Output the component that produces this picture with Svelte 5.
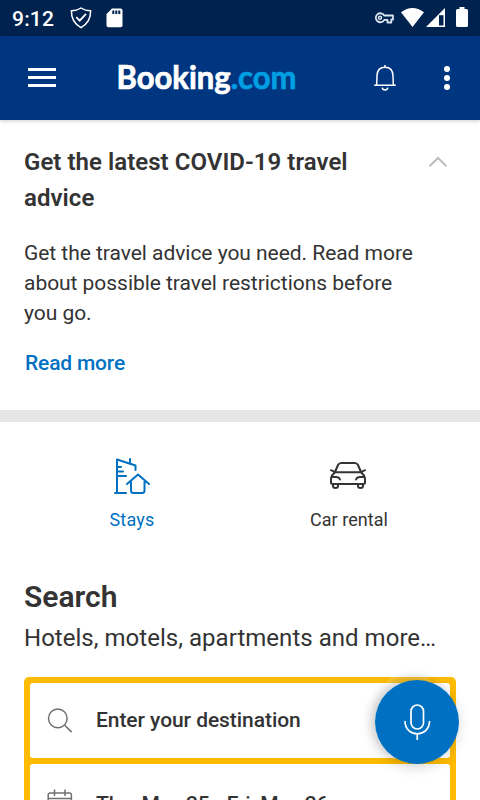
<script>
  const advice = ['Get the travel advice you need. Read more', 'about possible travel restrictions before', 'you go.'];
</script>

<main class="screen">
  <div class="status">
    <span class="clock">9:12</span>
    <svg class="shield" width="22" height="22" viewBox="0 0 22 22" fill="none" stroke="#fff" stroke-width="1.500">
      <path d="M11 1C8 3 4.500 3.700 1.400 3.800C1.200 11 3.500 16.500 11 20.700C18.500 16.500 20.800 11 20.600 3.800C17.500 3.700 14 3 11 1Z" />
      <path d="M6.300 10.200L9.700 13.600L16 6.800" stroke-width="1.800" />
    </svg>
    <svg class="card" width="17" height="20" viewBox="0 0 17 20">
      <path fill="#fff" d="M6 .5H14.500Q16.500 .5 16.500 2.500V17.500Q16.500 19.300 14.500 19.300H2.500Q.5 19.300 .5 17.500V6Z" />
      <path fill="#00224f" d="M6.300 2.500H8.300V6H6.300ZM9.300 2.500H11.300V6H9.300ZM12.300 2.500H14.300V6H12.300Z" />
    </svg>
    <svg class="signals" width="96" height="24" viewBox="373 6 96 24">
      <path d="M384.200 15.500H393V19.500H391.300V22.500H387.500V19.800H384.300A4.500 4.500 0 1 1 384.200 15.500Z" fill="none" stroke="#dce4ef" stroke-width="1.800" stroke-linejoin="round" />
      <circle cx="380" cy="17.700" r="1.500" fill="none" stroke="#dce4ef" stroke-width="1.500" />
      <path fill="#fff" d="M401 12.300Q412.500 3.500 424 12.300L412.500 27ZM426 27L445 8V27Z" />
      <path fill="#00224f" d="M439 15.200H443.500V25.500H439Z" />
      <path fill="#fff" d="M459.500 7H464.500V9H466.500Q468 9 468 10.500V25.500Q468 27 466.500 27H457.500Q456 27 456 25.500V10.500Q456 9 457.500 9H459.500Z" />
    </svg>
  </div>

  <header>
    <div class="menu"><i></i><i></i><i></i></div>
    <svg class="logo" width="184" height="44" viewBox="0 0 184 44" role="img" aria-label="Booking.com">
      <text x="-1.500" y="30.500" textLength="180" lengthAdjust="spacingAndGlyphs" fill="#fff" stroke="#fff">Booking<tspan fill="#009fe3" stroke="#009fe3">.com</tspan></text>
    </svg>
    <svg class="bell" width="24" height="28" viewBox="0 0 24 28" fill="none" stroke="#fff" stroke-width="1.500">
      <path d="M3.500 21.300C4 18 3.800 15 4 11.700C4.200 6 7.500 3.200 12 3.200S19.800 6 20 11.700C20.200 15 20 18 20.500 21.300M1.200 21.300H22.800M12 1V3.200" />
      <path d="M9.200 23.700Q9.600 26 12 26T14.800 23.700" />
    </svg>
    <div class="dots"><i></i><i></i><i></i></div>
  </header>

  <section class="notice">
    <div class="headline">
      <h1>Get the latest COVID-19 travel<br />advice</h1>
      <svg width="20" height="12" viewBox="0 0 20 12"><path d="M1.500 10.300L10 2L18.500 10.300" fill="none" stroke="#bdbdbd" stroke-width="2" /></svg>
    </div>
    <p>{#each advice as line}<span>{line}</span>{/each}</p>
    <a href="#advice">Read more</a>
  </section>

  <nav>
    <div class="tab active">
      <svg width="40" height="40" viewBox="112 456 40 40" fill="none" stroke="#0071c2" stroke-width="2" stroke-linecap="round" stroke-linejoin="round">
        <path d="M115 493H126M117 493V459.500L135.500 465.500V470M130 463V459M117 467H121M117 471.500H123M117 476H126" />
        <path d="M127 484L138 474.500L149 484M131 482V490.500Q131 493 133.500 493H142Q144.500 493 144.500 490.500V482" />
      </svg>
      <span>Stays</span>
    </div>
    <div class="tab">
      <svg width="40" height="40" viewBox="328 456 40 40" fill="none" stroke="#333" stroke-width="2" stroke-linecap="round" stroke-linejoin="round">
        <path d="M335 472L338 465Q339 463 341.500 463H354.500Q357 463 358 465L361 472M335 472.300H361L364 475.500Q365 477 365 479V482.500Q365 484 363 484H333Q331 484 331 482.500V479Q331 477 332 475.500ZM331 470.200L334.500 471.800M365 470.200L361.500 471.800" />
        <path d="M332.500 477H336Q339 477 340 479.500M363.500 477H360Q357 477 356 479.500M333 484V486Q333 488 335.500 488T338 486V484M358 484V486Q358 488 360.500 488T363 486V484" />
      </svg>
      <span class="car">Car rental</span>
    </div>
  </nav>

  <section class="search">
    <h2>Search</h2>
    <p class="sub">Hotels, motels, apartments and more…</p>
    <div class="fields">
      <div class="field">
        <svg width="26" height="26" viewBox="0 0 26 26" fill="none" stroke="#707070" stroke-width="1.500"><circle cx="10.800" cy="10.400" r="9.300" /><path d="M17.500 17L24.600 24.100" /></svg>
        <span class="dest">Enter your destination</span>
      </div>
      <div class="field">
        <svg width="26" height="26" viewBox="0 0 26 26" fill="none" stroke="#707070" stroke-width="1.500"><rect x="1.200" y="4" width="23.200" height="21" rx="2" /><path d="M1 9.500H24.500M7.500 .5V7M18 .5V7" /></svg>
        <span class="date">Thu, May 25 - Fri, May 26</span>
      </div>
    </div>
  </section>

  <button class="mic" aria-label="Voice search">
    <svg class="glint" width="84" height="84" viewBox="370 675 84 84"><path d="M370 698L393 675H425L449 698V735L425 759H393L370 731Z" fill="#fff" fill-opacity=".16" /></svg>
    <span class="disc">
      <svg width="28" height="38" viewBox="403 703 28 38" fill="none" stroke="#fff" stroke-width="1.700"><rect x="411" y="705" width="12.500" height="24" rx="6.250" /><path d="M405 721C405 738 429.500 738 429.500 721M417.250 733.500V740" /></svg>
    </span>
  </button>
</main>

<style>
  :global(body) { margin: 0; overflow: hidden; }
  .screen { position: relative; width: 480px; height: 800px; overflow: hidden; background: #fff; color: #333; font-family: Roboto, sans-serif; }
  svg { display: block; flex: none; overflow: visible; }
  .status { display: flex; height: 36px; background: #00224f; align-items: flex-start; }
  .clock { width: 58px; padding-left: 12px; color: #fff; font-size: 21px; font-weight: 500; line-height: 38px; letter-spacing: .2px; }
  .shield { margin-top: 7px; }
  .card { margin: 8px 0 0 14px; }
  .signals { margin: 6px 11px 0 auto; }
  header { display: flex; height: 84px; background: #003580; box-shadow: 0 1px 4px #0003; align-items: flex-start; }
  .menu { display: flex; flex-direction: column; gap: 5px; margin: 32px 0 0 28px; }
  .menu i { width: 28px; height: 3px; background: #fff; }
  .logo { margin: 22px 0 0 62px; }
  .logo text { font: 700 32px Lato, sans-serif; stroke-width: .7px; }
  .bell { margin: 28px 0 0 71px; }
  .dots { display: flex; flex-direction: column; gap: 3px; margin: 30px 0 0 47px; }
  .dots i { width: 6px; height: 6px; border-radius: 50%; background: #fff; }
  .notice { box-sizing: border-box; height: 302px; padding: 24px 24px 0; border-bottom: 12px solid #e6e6e6; }
  .headline { display: flex; justify-content: space-between; }
  .headline svg { margin: 12px 8px 0 0; }
  h1 { margin: 0; font-size: 24px; line-height: 36px; font-weight: 600; letter-spacing: .04px; white-space: nowrap; }
  .notice p { margin: 22px 0 0; font-size: 21px; line-height: 30px; letter-spacing: -.04px; white-space: nowrap; }
  .notice p span { display: block; }
  a { display: block; margin: 20px 0 0 1px; color: #0071c2; font-size: 21px; line-height: 30px; font-weight: 500; letter-spacing: -.17px; text-decoration: none; }
  nav { display: flex; height: 142px; padding: 0 24px; }
  .tab { display: flex; flex-direction: column; align-items: center; width: 216px; padding-top: 34px; }
  .tab span { margin-top: 12px; font-size: 18px; line-height: 24px; letter-spacing: .2px; }
  .tab .car { padding-left: 2px; letter-spacing: .04px; }
  .active { color: #0071c2; }
  .search { padding: 12px 24px 0; }
  h2 { margin: 0; font-size: 30px; line-height: 41px; font-weight: 600; }
  .sub { margin: 3px 0 0; font-size: 24px; line-height: 36px; letter-spacing: .03px; white-space: nowrap; }
  .fields { display: flex; flex-direction: column; gap: 6px; box-sizing: border-box; height: 180px; margin-top: 21px; padding: 6px; border-radius: 5px; background: #febb02; }
  .field { display: flex; flex: none; align-items: center; box-sizing: border-box; height: 75px; padding-left: 17px; border-radius: 3px; background: #fff; font-size: 21px; font-weight: 500; white-space: nowrap; }
  .field span { margin-left: 23px; }
  .field .dest { margin-bottom: 2px; letter-spacing: -.06px; }
  .field .date { margin-top: 4px; letter-spacing: -.12px; }
  .mic { position: absolute; left: 375px; top: 680px; width: 84px; height: 84px; padding: 0; border: 0; border-radius: 50%; background: transparent; box-shadow: -4px -4px 6px #0000001a, -2px 2px 14px #0003; }
  .glint { position: absolute; left: -5px; top: -5px; }
  .disc { position: relative; display: grid; place-items: center; width: 84px; height: 84px; border-radius: 50%; background: #0071c2; }
</style>
